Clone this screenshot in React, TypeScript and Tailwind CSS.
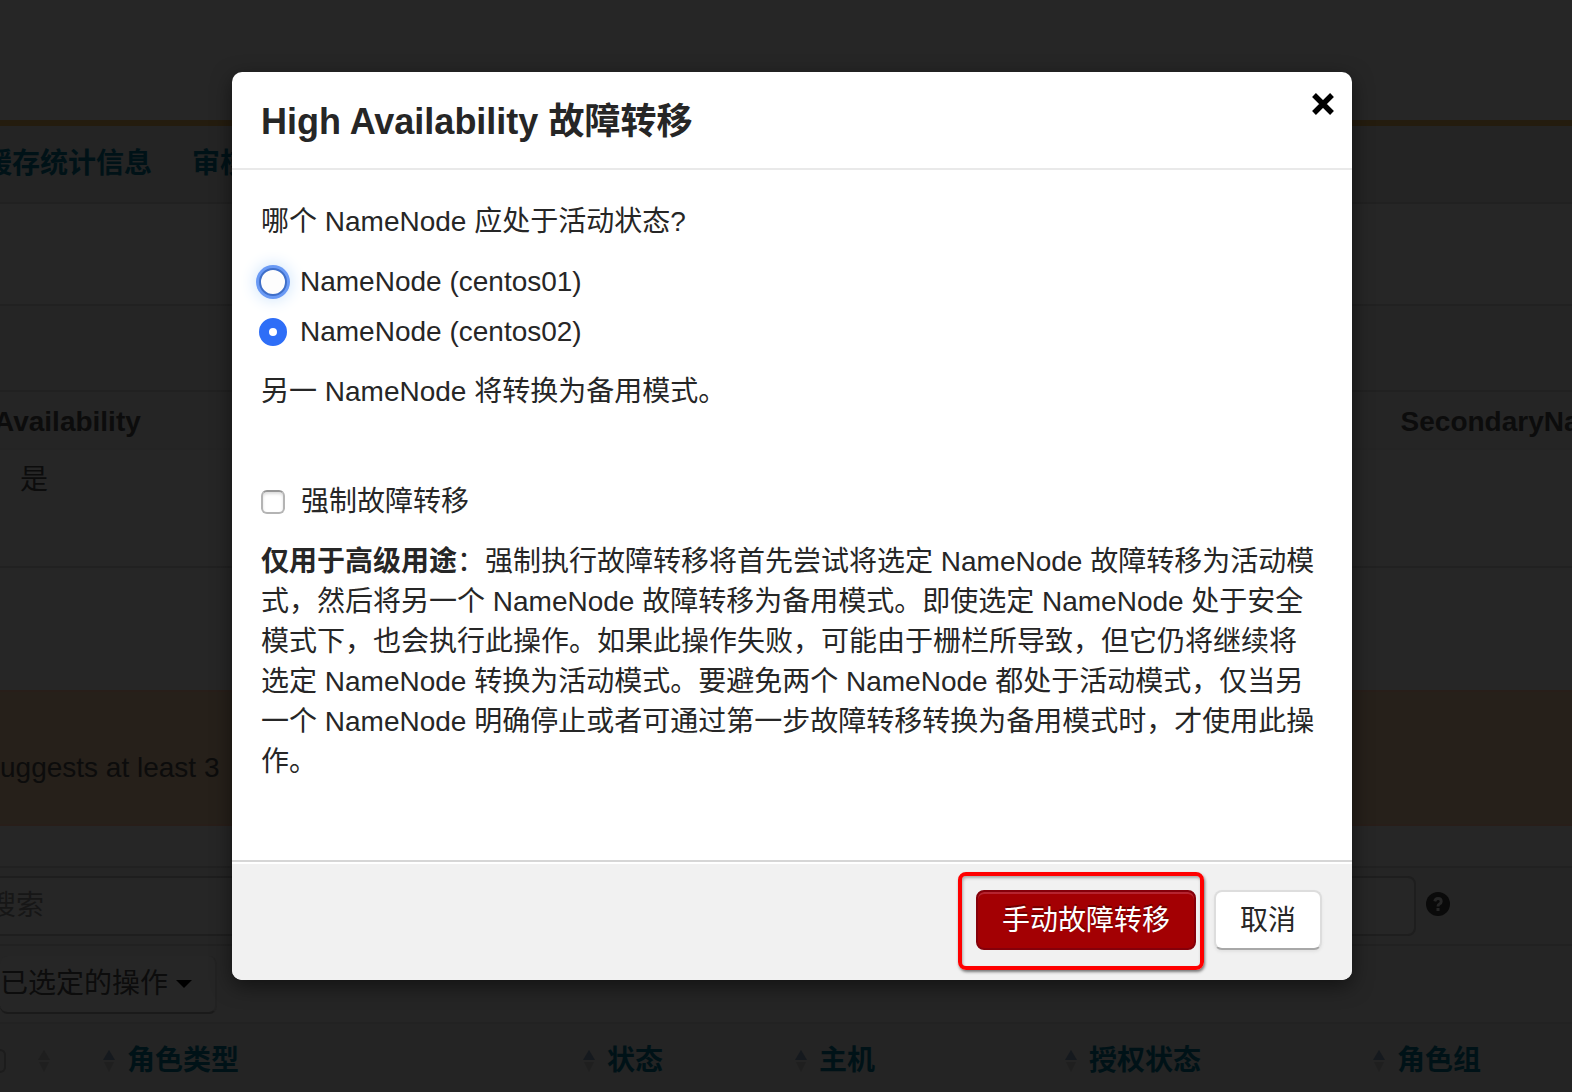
import React from "react";

const columns = [
  { label: "角色类型", width: "w-[480px]" },
  { label: "状态", width: "w-[212px]" },
  { label: "主机", width: "w-[270px]" },
  { label: "授权状态", width: "w-[308px]" },
  { label: "角色组", width: "" },
];

function SortIcon({ active }: { active?: boolean }) {
  return (
    <svg className="h-[22px] w-3 shrink-0" viewBox="0 0 12 22" aria-hidden="true">
      <path d="M6 0L12 10H0Z" fill={active ? "#15191e" : "#1e1e1e"} />
      <path d="M1 12H11L6 22Z" fill="#1f1f1f" />
    </svg>
  );
}

function Backdrop() {
  return (
    <div className="min-h-screen overflow-hidden bg-[#262626] text-[28px] leading-10 whitespace-nowrap text-[#0c0c0c]">
      <header className="h-[126px] border-b-[6px] border-[#241c0e] bg-[#262626]" />
      <nav className="flex h-[78px] items-center gap-10 border-b-2 border-[#212121] bg-[#242424] font-bold text-[#001217]">
        <a href="#cache" className="-ml-4 block">缓存统计信息</a>
        <a href="#audit" className="block">审核</a>
      </nav>
      <div className="h-[102px] border-b-2 border-[#212121]" />
      <div className="h-[86px] border-b-2 border-[#212121] bg-[#252525]" />
      <div className="flex h-[58px] items-center justify-between border-b-2 border-[#242424] bg-[#252525] pt-1 font-bold">
        <span className="-ml-[6px]">Availability</span>
        <span className="-mr-12">SecondaryName</span>
      </div>
      <div className="h-[118px] border-b-2 border-[#212121] px-5 py-[10px]">是</div>
      <div className="h-[122px]" />
      <div className="flex h-[136px] items-center border-y-2 border-[#281e19] bg-[#26201a] pt-5">
        <span>uggests at least 3</span>
      </div>
      <div className="h-[42px] border-b-2 border-[#212121]" />
      <div className="flex h-[78px] items-center gap-[10px] border-b-2 border-[#212121] bg-[#252525] pr-[122px]">
        <input
          aria-label="搜索"
          placeholder="搜索"
          className="-ml-6 h-[60px] min-w-0 flex-1 rounded-lg border-2 border-[#1e1e1e] bg-[#262626] px-[10px] placeholder:text-[#161616]"
        />
        <svg className="mb-1 h-6 w-6 shrink-0" viewBox="0 0 24 24" aria-hidden="true">
          <circle cx="12" cy="12" r="12" fill="#0a0a0a" />
          <path d="M8.8 9.4Q9.4 6.6 12 6.6Q15.2 6.6 15.2 9.4Q15.2 11 13.4 12Q12 12.8 12 14.4" fill="none" stroke="#262626" strokeWidth="3" />
          <path d="M10.5 16H13.5V19H10.5Z" fill="#262626" />
        </svg>
      </div>
      <div className="h-[78px] border-b-2 border-[#222222] bg-[#252525] pt-[10px]">
        <button className="flex h-[58px] w-[217px] items-center gap-2 rounded-lg border-r-2 border-b-2 border-r-[#222222] border-b-[#1a1a1a] bg-[#262626]">
          已选定的操作
          <svg className="h-2 w-4" viewBox="0 0 16 8" aria-hidden="true">
            <path d="M0 0H16L8 8Z" fill="#000" />
          </svg>
        </button>
      </div>
      <table className="w-full table-fixed bg-[#242424]">
        <thead>
          <tr className="h-[74px] text-left font-bold text-[#001217]">
            <th className="w-[103px]">
              <span className="flex items-center gap-8">
                <input
                  type="checkbox"
                  aria-label="全选"
                  className="-ml-[18px] h-6 w-6 appearance-none rounded-md border-2 border-[#1c1c1c]"
                />
                <SortIcon />
              </span>
            </th>
            {columns.map((c) => (
              <th key={c.label} className={c.width}>
                <span className="flex items-center gap-3">
                  <SortIcon active />
                  {c.label}
                </span>
              </th>
            ))}
          </tr>
        </thead>
      </table>
    </div>
  );
}

function NodeOption({ label, checked, focused }: { label: string; checked?: boolean; focused?: boolean }) {
  return (
    <label className="flex items-center gap-[13px]">
      <input
        type="radio"
        name="namenode"
        defaultChecked={checked}
        className={
          "-ml-[2px] h-7 w-7 shrink-0 appearance-none rounded-full " +
          (focused
            ? "border-[2px] border-[#3f6fc9] bg-[#fdfdfd] shadow-[0_0_0_3px_#6a9af5,0_0_16px_4px_#cfe5fb]"
            : "border-[10px] border-[#2e6ef7] bg-white")
        }
      />
      {label}
    </label>
  );
}

function FailoverDialog() {
  return (
    <section
      role="dialog"
      aria-labelledby="dialog-title"
      className="w-[1120px] overflow-hidden rounded-[10px] bg-white text-[28px] leading-10 text-[#262626] shadow-[0_6px_20px_rgba(0,0,0,0.5)]"
    >
      <header className="flex items-start justify-between border-b-2 border-[#e9e9e9] pt-5 pr-[17px] pb-6 pl-[29px]">
        <h1 id="dialog-title" className="pt-2 text-[36px] leading-[44px] font-bold">
          High Availability 故障转移
        </h1>
        <button aria-label="关闭" className="text-black">
          <svg className="h-6 w-6" viewBox="0 0 24 24" aria-hidden="true">
            <path d="M3 3L21 21M21 3L3 21" stroke="currentColor" strokeWidth="5.4" />
          </svg>
        </button>
      </header>
      <div className="px-[29px] pt-8 pb-[78px]">
        <p>哪个 NameNode 应处于活动状态?</p>
        <div className="my-5 flex flex-col gap-[10px]">
          <NodeOption label="NameNode (centos01)" focused />
          <NodeOption label="NameNode (centos02)" checked />
        </div>
        <p>另一 NameNode 将转换为备用模式。</p>
        <label className="mt-[70px] mb-5 flex items-center gap-4">
          <input
            type="checkbox"
            className="h-6 w-6 shrink-0 appearance-none rounded-md border-2 border-[#b4b4b4] border-t-[#979797] bg-white shadow-[inset_0_2px_3px_#dddddd]"
          />
          强制故障转移
        </label>
        <p>
          <strong>仅用于高级用途</strong>：强制执行故障转移将首先尝试将选定 NameNode 故障转移为活动模式，然后将另一个 NameNode
          故障转移为备用模式。即使选定 NameNode 处于安全模式下，也会执行此操作。如果此操作失败，可能由于栅栏所导致，但它仍将继续将选定
          NameNode 转换为活动模式。要避免两个 NameNode 都处于活动模式，仅当另一个 NameNode
          明确停止或者可通过第一步故障转移转换为备用模式时，才使用此操作。
        </p>
      </div>
      <footer className="flex items-start justify-end gap-[10px] border-t-2 border-[#d6d6d6] bg-[#f1f1f1] px-[30px] py-[10px] shadow-[inset_0_2px_0_#ffffff]">
        <div className="rounded-lg border-4 border-[#ff0000] pt-[14px] pr-1 pb-4 pl-[14px] shadow-[1px_2px_3px_#777777,inset_1px_2px_3px_#aaaaaa]">
          <button className="block h-[60px] rounded-lg border-2 border-[#85000a] bg-[#a30003] px-6 pt-[2px] text-white shadow-[inset_0_2px_0_#b52430] [text-shadow:0_-2px_0_#700000]">
            手动故障转移
          </button>
        </div>
        <button className="mt-[18px] h-[60px] rounded-lg border-2 border-[#dddddd] border-b-[#a8a8a8] bg-white px-6 pt-[2px] shadow-[0_2px_3px_#e2e2e2]">
          取消
        </button>
      </footer>
    </section>
  );
}

export default function App() {
  return (
    <main lang="zh-CN" className="relative font-['Liberation_Sans','Noto_Sans_CJK_SC',sans-serif]">
      <Backdrop />
      <div className="absolute inset-0 flex items-start justify-center pt-[72px] pl-3">
        <FailoverDialog />
      </div>
    </main>
  );
}
